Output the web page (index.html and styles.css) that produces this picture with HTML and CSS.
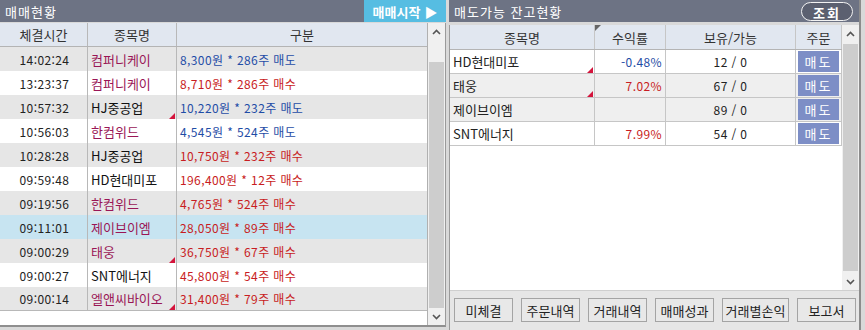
FILE: index.html
```html
<!DOCTYPE html>
<html lang="ko">
<head>
  <meta charset="UTF-8">
  <title>매매현황</title>
  <link rel="stylesheet" href="styles.css">
</head>
<body>
  <div class="screen">

    <section class="panel trades">
      <div class="titlebar">
        <span class="title">매매현황</span>
        <button class="start-btn">매매시작 <span class="play">▶</span></button>
      </div>
      <div class="table-wrap">
        <div class="grid">
          <div class="row head"><div>체결시간</div><div>종목명</div><div>구분</div></div>
          <div class="row alt"><div class="time">14:02:24</div><div class="name">컴퍼니케이</div><div class="kind sell">8,300원 * 286주 매도</div></div>
          <div class="row"><div class="time">13:23:37</div><div class="name">컴퍼니케이</div><div class="kind buy">8,710원 * 286주 매수</div></div>
          <div class="row alt"><div class="time">10:57:32</div><div class="name plain">HJ중공업<span class="mark"></span></div><div class="kind sell">10,220원 * 232주 매도</div></div>
          <div class="row"><div class="time">10:56:03</div><div class="name">한컴위드</div><div class="kind sell">4,545원 * 524주 매도</div></div>
          <div class="row alt"><div class="time">10:28:28</div><div class="name plain">HJ중공업</div><div class="kind buy">10,750원 * 232주 매수</div></div>
          <div class="row"><div class="time">09:59:48</div><div class="name plain">HD현대미포</div><div class="kind buy">196,400원 * 12주 매수</div></div>
          <div class="row alt"><div class="time">09:19:56</div><div class="name">한컴위드</div><div class="kind buy">4,765원 * 524주 매수</div></div>
          <div class="row selected"><div class="time">09:11:01</div><div class="name">제이브이엠</div><div class="kind buy">28,050원 * 89주 매수</div></div>
          <div class="row alt"><div class="time">09:00:29</div><div class="name">태웅<span class="mark"></span></div><div class="kind buy">36,750원 * 67주 매수</div></div>
          <div class="row"><div class="time">09:00:27</div><div class="name plain">SNT에너지</div><div class="kind buy">45,800원 * 54주 매수</div></div>
          <div class="row alt last"><div class="time">09:00:14</div><div class="name">엘앤씨바이오<span class="mark"></span></div><div class="kind buy">31,400원 * 79주 매수</div></div>
        </div>
        <div class="vscroll">
          <div class="arrow"><svg width="9" height="6" viewBox="0 0 9 6"><polyline points="1,5 4.5,1.5 8,5" fill="none" stroke="#555" stroke-width="1.6"/></svg></div>
          <div class="track"><div class="thumb tall"></div></div>
          <div class="arrow"><svg width="9" height="6" viewBox="0 0 9 6"><polyline points="1,1 4.5,4.5 8,1" fill="none" stroke="#555" stroke-width="1.6"/></svg></div>
        </div>
      </div>
    </section>

    <section class="panel holdings">
      <div class="titlebar">
        <span class="title">매도가능 잔고현황</span>
        <button class="query-btn">조회</button>
      </div>
      <div class="holdings-body">
        <div class="holdings-main">
          <div class="hgrid">
            <div class="hrow head"><div>종목명</div><div class="rate-head">수익률<span class="corner"></span></div><div>보유/가능</div><div>주문</div></div>
            <div class="hrow"><div class="hname">HD현대미포<span class="mark"></span></div><div class="rate sell">-0.48%</div><div class="qty">12 / 0</div><div class="order"><span class="sell-btn">매도</span></div></div>
            <div class="hrow alt"><div class="hname">태웅<span class="mark"></span></div><div class="rate buy">7.02%</div><div class="qty">67 / 0</div><div class="order"><span class="sell-btn">매도</span></div></div>
            <div class="hrow alt"><div class="hname">제이브이엠</div><div class="rate"></div><div class="qty">89 / 0</div><div class="order"><span class="sell-btn">매도</span></div></div>
            <div class="hrow"><div class="hname">SNT에너지</div><div class="rate buy">7.99%</div><div class="qty">54 / 0</div><div class="order"><span class="sell-btn">매도</span></div></div>
          </div>
          <div class="vscroll">
            <div class="arrow"><svg width="9" height="6" viewBox="0 0 9 6"><polyline points="1,5 4.5,1.5 8,5" fill="none" stroke="#555" stroke-width="1.6"/></svg></div>
            <div class="track"><div class="thumb full"></div></div>
            <div class="arrow"><svg width="9" height="6" viewBox="0 0 9 6"><polyline points="1,1 4.5,4.5 8,1" fill="none" stroke="#555" stroke-width="1.6"/></svg></div>
          </div>
        </div>
        <div class="button-bar">
          <button class="btn">미체결</button>
          <button class="btn">주문내역</button>
          <button class="btn">거래내역</button>
          <button class="btn">매매성과</button>
          <button class="btn wide">거래별손익</button>
          <button class="btn">보고서</button>
        </div>
      </div>
    </section>

  </div>
</body>
</html>
```

FILE: styles.css
```css
* {
  margin: 0;
  padding: 0;
  box-sizing: border-box;
}

body {
  width: 865px;
  height: 330px;
  overflow: hidden;
  background: #d9d9d9;
  font-family: "Noto Sans CJK KR", "Noto Sans", sans-serif;
  font-size: 12px;
  color: #222;
}

.screen {
  display: flex;
  gap: 3px;
  height: 330px;
}

.panel {
  display: flex;
  flex-direction: column;
}

/* title bars */

.titlebar {
  height: 22px;
  background: #6d7384;
  display: flex;
  align-items: center;
  justify-content: space-between;
  color: #fff;
}

.title {
  font-size: 13px;
  padding-left: 5px;
  letter-spacing: 1px;
}

.start-btn {
  height: 22px;
  width: 82px;
  border: none;
  background: #56bde2;
  color: #fff;
  font-family: inherit;
  font-size: 13px;
  font-weight: bold;
  display: flex;
  align-items: center;
  justify-content: center;
  gap: 4px;
}

.play {
  font-size: 13px;
}

.query-btn {
  height: 19px;
  width: 52px;
  margin-right: 6px;
  border: 1px solid #f2f2f2;
  border-radius: 10px;
  background: #5b6070;
  color: #fff;
  font-family: inherit;
  font-size: 13px;
  font-weight: bold;
  letter-spacing: 2px;
}

/* left: trades */

.trades {
  width: 446px;
}

.table-wrap {
  margin-top: 1px;
  height: 304px;
  display: flex;
  background: #fff;
  border-bottom: 2px solid #8f8f8f;
  border-right: 1px solid #9a9a9a;
}

.grid {
  width: 428px;
  border-right: 1px solid #b0b0b0;
}

.row {
  display: grid;
  grid-template-columns: 88px 89px 1fr;
  height: 24px;
}

.row > div {
  position: relative;
  display: flex;
  align-items: center;
  border-right: 1px solid #b8b8b8;
  white-space: nowrap;
}

.row > div:last-child {
  border-right: none;
}

.row.head {
  background: #e1e7f0;
  border-bottom: 1px solid #b4b4b4;
  color: #333;
  font-size: 13px;
}

.row.head > div {
  justify-content: center;
}

.row.alt {
  background: #e6e6e6;
}

.row.selected {
  background: #c7e4f1;
}

.row.last {
  border-bottom: 1px solid #b8b8b8;
}

.time {
  justify-content: center;
  padding-left: 2px;
  letter-spacing: 0.4px;
}

.name {
  padding-left: 3px;
  color: #9a1656;
  font-size: 13px;
}

.name.plain {
  color: #111;
}

.kind {
  padding-left: 3px;
  letter-spacing: 0.4px;
}

.sell {
  color: #1f4da6;
}

.buy {
  color: #c81c22;
}

.mark {
  position: absolute;
  right: 1px;
  bottom: 0;
  width: 0;
  height: 0;
  border-left: 6px solid transparent;
  border-bottom: 6px solid #d4143c;
}

/* scrollbars */

.vscroll {
  width: 17px;
  display: flex;
  flex-direction: column;
  background: #f0f0f0;
}

.arrow {
  height: 17px;
  display: flex;
  align-items: center;
  justify-content: center;
}

.track {
  flex: 1;
  padding: 0 1px;
}

.thumb {
  background: #cdcdcd;
}

.thumb.tall {
  margin-top: 22px;
  height: 246px;
}

.thumb.full {
  margin-top: 2px;
  height: calc(100% - 4px);
}

/* right: holdings */

.holdings {
  flex: 1;
  border-right: 2px solid #8c8c8c;
  margin-right: 4px;
}

.holdings-body {
  flex: 1;
  margin-top: 3px;
  display: flex;
  flex-direction: column;
  border-left: 1px solid #9a9a9a;
}

.holdings-main {
  height: 265px;
  display: flex;
  background: #fff;
}

.hgrid {
  flex: 1;
}

.hrow {
  display: grid;
  grid-template-columns: 145px 71px 130px 46px;
  height: 24px;
  border-bottom: 1px solid #c6c6c6;
}

.hrow > div {
  position: relative;
  display: flex;
  align-items: center;
  border-right: 1px solid #c6c6c6;
  white-space: nowrap;
}

.hrow.head {
  height: 25px;
  background: #e1e7f0;
  border-bottom-color: #b4b4b4;
  color: #333;
  font-size: 13px;
}

.hrow.head > div {
  justify-content: center;
}

.hrow.alt {
  background: #efefef;
}

.corner {
  position: absolute;
  left: 0;
  top: 0;
  width: 0;
  height: 0;
  border-top: 6px solid #666;
  border-right: 6px solid transparent;
}

.hname {
  padding-left: 3px;
  font-size: 13px;
}

.rate {
  justify-content: flex-end;
  padding-right: 3px;
  letter-spacing: 0.4px;
}

.qty {
  justify-content: center;
  letter-spacing: 0.4px;
}

.order {
  padding: 1px 2px 1px 2px;
}

.sell-btn {
  width: 100%;
  height: 100%;
  background: #7d8ec6;
  color: #fff;
  font-size: 13px;
  letter-spacing: 2px;
  display: flex;
  align-items: center;
  justify-content: center;
}

.button-bar {
  flex: 1;
  display: flex;
  gap: 8px;
  padding: 7px 0 0 4px;
  background: #e6e6e6;
  border-top: 1px solid #cfcfcf;
}

.btn {
  width: 59px;
  height: 24px;
  border: 1px solid #a4a4a4;
  background: #e8e8e8;
  font-family: inherit;
  font-size: 13px;
  color: #222;
}

.btn.wide {
  width: 67px;
}
```
